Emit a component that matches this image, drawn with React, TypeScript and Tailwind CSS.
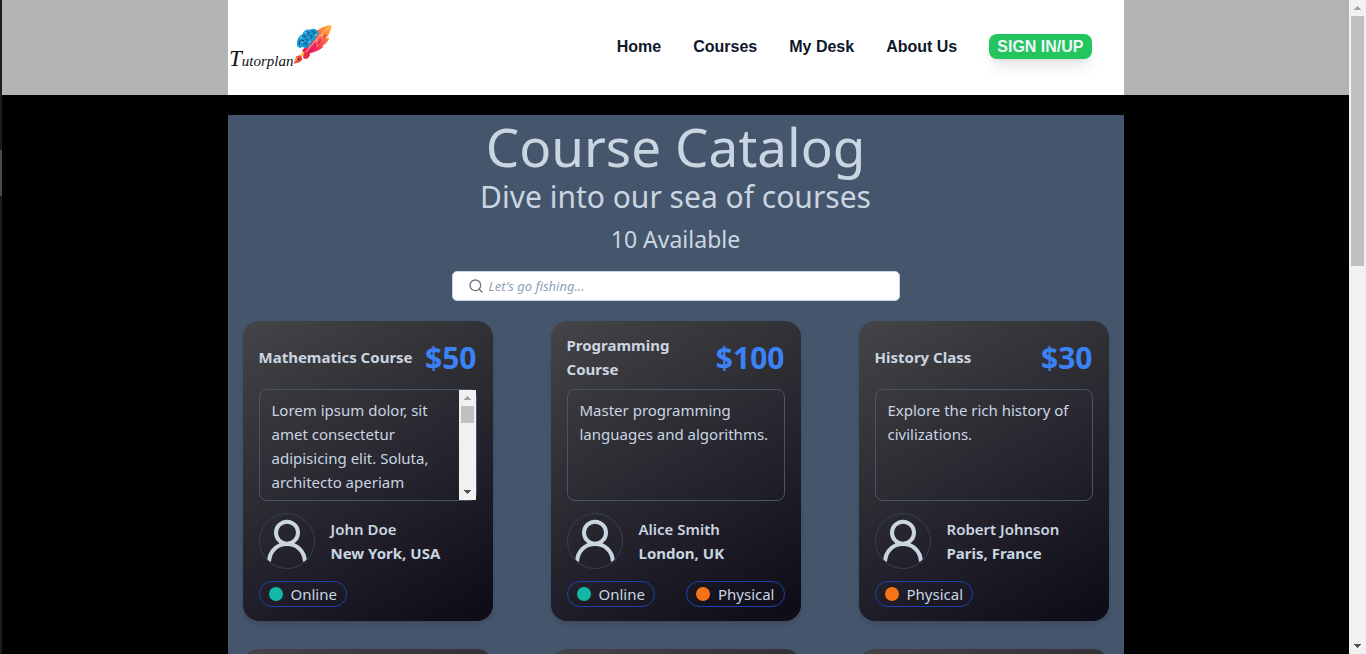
import React from "react";
import { Search } from "lucide-react";

type Mode = "Online" | "Physical";

interface Course {
  title: string;
  price: number;
  description: string;
  tutor: string;
  place: string;
  modes: Mode[];
  scrolls?: boolean;
}

const courses: Course[] = [
  {
    title: "Mathematics Course",
    price: 50,
    description:
      "Lorem ipsum dolor, sit amet consectetur adipisicing elit. Soluta, architecto aperiam",
    tutor: "John Doe",
    place: "New York, USA",
    modes: ["Online"],
    scrolls: true,
  },
  {
    title: "Programming Course",
    price: 100,
    description: "Master programming languages and algorithms.",
    tutor: "Alice Smith",
    place: "London, UK",
    modes: ["Online", "Physical"],
  },
  {
    title: "History Class",
    price: 30,
    description: "Explore the rich history of civilizations.",
    tutor: "Robert Johnson",
    place: "Paris, France",
    modes: ["Physical"],
  },
];

const links = ["Home", "Courses", "My Desk", "About Us"];

function Arrow({ down = false, dim = false }: { down?: boolean; dim?: boolean }) {
  return (
    <svg viewBox="0 0 17 16" className="h-4 w-[17px] shrink-0" aria-hidden="true">
      <path
        d={down ? "M5 6h7v1h-1v1h-1v1H9v1H8v-1H7V8H6V7H5z" : "M5 10h7V9h-1V8h-1V7H9V6H8v1H7v1H6v1H5z"}
        fill={dim ? "#a3a3a3" : "#505050"}
      />
    </svg>
  );
}

function ScrollTrack({ thumb }: { thumb: string }) {
  return (
    <div className="flex w-[17px] shrink-0 flex-col bg-[#f1f1f1]" aria-hidden="true">
      <Arrow dim />
      <div className="flex-1 px-[2px]">
        <div className={`bg-[#c1c1c1] ${thumb}`} />
      </div>
      <Arrow down />
    </div>
  );
}

function Logo() {
  return (
    <svg viewBox="24 15 318 162" className="h-[54px] w-[106px]" role="img" aria-label="Tutorplan">
      <defs>
        <linearGradient id="feather" x1="0" y1="1" x2="1" y2="0">
          <stop offset="0" stopColor="#e5185d" />
          <stop offset="0.4" stopColor="#f5325b" />
          <stop offset="0.7" stopColor="#ff7a3c" />
          <stop offset="1" stopColor="#ffc02e" />
        </linearGradient>
      </defs>
      <text
        x="27"
        y="154"
        fontStyle="italic"
        fontWeight="400"
        fill="#111111"
        fontFamily="'Liberation Serif', serif"
      >
        <tspan fontSize="69">T</tspan>
        <tspan fontSize="45">utorplan</tspan>
      </text>
      <path
        d="M334 30C310 32 286 46 273 66C264 81 256 94 246 108L260 118C282 113 302 105 312 94L304 94C316 88 325 79 328 68L319 70C329 57 334 44 334 30Z"
        fill="url(#feather)"
      />
      <path d="M326 38C304 55 280 83 254 116M306 56l0 20M290 74l2 20" stroke="#ffd9a0" strokeWidth="2.5" fill="none" />
      <path d="M318 60C303 73 289 89 268 111" stroke="#c9156d" strokeWidth="3" fill="none" />
      <path
        d="M232 94C228 79 236 62 247 58C250 46 262 41 270 44C280 38 294 44 297 54C291 60 289 67 286 72C278 76 272 86 268 95C260 100 252 99 248 96C242 100 236 99 232 94Z"
        fill="#1b9bd3"
      />
      <path
        d="M238 88C236 76 245 74 251 77M247 64C254 58 259 65 255 69M261 51C269 48 269 57 263 59M276 50C285 48 288 55 281 57M270 62C278 60 281 66 272 69M258 73C267 71 267 78 259 83M250 87C257 83 262 87 260 92"
        stroke="#103a78"
        strokeWidth="3"
        fill="none"
        strokeLinecap="round"
      />
      <path d="M241 70l6-5M254 54l5-3M265 83l6-5M285 62l5-3M244 82l4-1" stroke="#63d4f1" strokeWidth="4" />
      <path d="M221 146L229 124L242 120L248 132L240 141Z" fill="#ee3b43" />
      <path d="M221 146L237 130L231 124Z" fill="#ffab2e" />
      <circle cx="235" cy="132" r="3" fill="#5d153a" />
      <path d="M242 119L249 110L257 116L250 125Z" fill="#ffb52c" />
      <path d="M249 125L254 112L269 114L270 122L262 131L252 131Z" fill="#e42d3c" />
    </svg>
  );
}

function Avatar() {
  return (
    <div className="size-14 shrink-0 overflow-hidden rounded-full border border-slate-700">
      <svg viewBox="3 3 162 162" className="size-full" fill="none" stroke="#cbd5e1" strokeWidth="12" aria-hidden="true">
        <circle cx="84" cy="59" r="33" />
        <path d="M30 146C32 113 55 93 84 93S136 113 138 146" />
      </svg>
    </div>
  );
}

function ModeBadge({ mode }: { mode: Mode }) {
  return (
    <span className="flex h-[26px] items-center gap-2 rounded-full border border-[#1e40af] px-[9px]">
      <span className={`size-3.5 rounded-full ${mode === "Online" ? "bg-[#14b8a6]" : "bg-[#f97316]"}`} />
      {mode}
    </span>
  );
}

function Card({ children }: { children?: React.ReactNode }) {
  return (
    <article className="h-[300px] w-[250px] rounded-2xl bg-[linear-gradient(150deg,#454449_0%,#39383c_20%,#23222c_60%,#0f0e18_95%)] px-4 py-3 shadow-md">
      {children}
    </article>
  );
}

function CourseCard({ course }: { course: Course }) {
  return (
    <Card>
      <div className="flex h-12 items-center justify-between gap-2">
        <h3 className="font-bold">{course.title}</h3>
        <span className="text-[30px] leading-normal font-bold text-[#3b82f6]">${course.price}</span>
      </div>
      <div className="mt-2 flex h-28 rounded-lg border border-slate-600">
        <p className="flex-1 px-3 py-2">{course.description}</p>
        {course.scrolls && <ScrollTrack thumb="h-[17px]" />}
      </div>
      <div className="mt-3 flex items-center gap-4">
        <Avatar />
        <div>
          <p className="font-semibold">{course.tutor}</p>
          <p className="font-bold">{course.place}</p>
        </div>
      </div>
      <div className="mt-3 flex items-center justify-between">
        {course.modes.map((mode) => (
          <ModeBadge key={mode} mode={mode} />
        ))}
      </div>
    </Card>
  );
}

export default function App() {
  return (
    <div className="flex h-screen overflow-hidden bg-black font-['Noto_Sans','Open_Sans',sans-serif] text-[15px] leading-6 text-slate-300">
      <div className="flex w-[2px] shrink-0 flex-col bg-[#1c1c1c]" aria-hidden="true">
        <div className="mt-[150px] h-[46px] bg-[#4a4a4a]" />
      </div>

      <div className="min-w-0 flex-1 overflow-hidden">
        <header className="bg-[#b3b3b3]">
          <nav className="mx-auto flex h-[95px] max-w-4xl items-center justify-between bg-white pr-8 pb-0.5 font-['Liberation_Sans',Arial,sans-serif] text-base font-bold text-[#0f172a]">
            <a href="#home">
              <Logo />
            </a>
            <div className="flex items-center gap-8">
              {links.map((link) => (
                <a key={link} href="#nav">
                  {link}
                </a>
              ))}
              <button type="button" className="rounded-lg bg-[#22c55e] px-2 leading-[25px] text-slate-100 shadow-lg">
                SIGN IN/UP
              </button>
            </div>
          </nav>
        </header>

        <main className="mx-auto mt-5 max-w-4xl bg-slate-600 px-[15px] pb-7">
          <div className="text-center">
            <h1 className="text-[53px] leading-16">Course Catalog</h1>
            <h2 className="text-[30px] leading-9">Dive into our sea of courses</h2>
            <p className="mt-2 text-[23px] leading-8">10 Available</p>
          </div>

          <label className="mx-auto mt-4 flex h-[30px] max-w-md items-center gap-[5px] rounded-[5px] border border-slate-300 bg-white pl-[15px]">
            <Search size={16} color="#6b7280" aria-hidden="true" />
            <input
              type="text"
              aria-label="Search courses"
              placeholder="Let's go fishing..."
              className="min-w-0 flex-1 bg-transparent text-[13px] leading-5 text-slate-700 outline-none placeholder:text-slate-400 placeholder:italic"
            />
          </label>

          <div className="mt-5 flex flex-wrap justify-between gap-y-7">
            {courses.map((course) => (
              <CourseCard key={course.title} course={course} />
            ))}
            <Card />
            <Card />
            <Card />
          </div>
        </main>
      </div>

      <ScrollTrack thumb="h-[250px]" />
    </div>
  );
}
